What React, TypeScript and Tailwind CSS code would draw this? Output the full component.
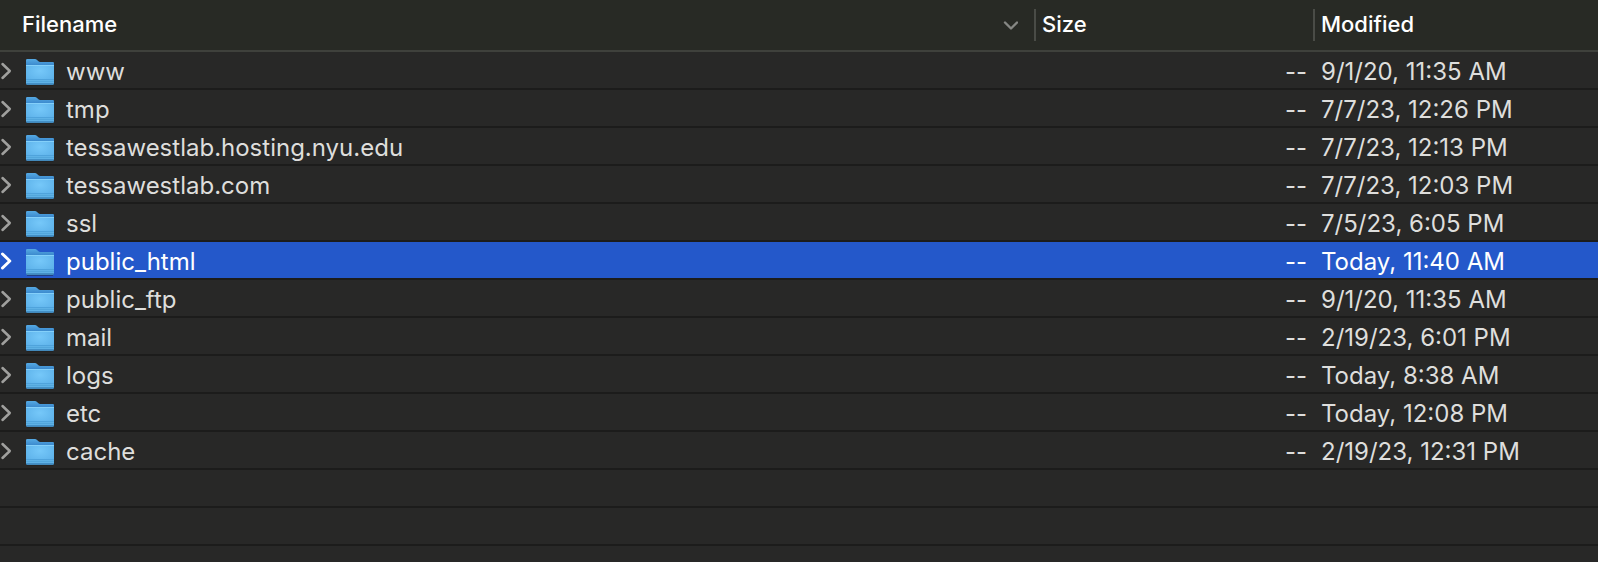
import { useState } from 'react';

const files = [
    { name: 'www', modified: '9/1/20, 11:35 AM' },
    { name: 'tmp', modified: '7/7/23, 12:26 PM' },
    { name: 'tessawestlab.hosting.nyu.edu', modified: '7/7/23, 12:13 PM' },
    { name: 'tessawestlab.com', modified: '7/7/23, 12:03 PM' },
    { name: 'ssl', modified: '7/5/23, 6:05 PM' },
    { name: 'public_html', modified: 'Today, 11:40 AM' },
    { name: 'public_ftp', modified: '9/1/20, 11:35 AM' },
    { name: 'mail', modified: '2/19/23, 6:01 PM' },
    { name: 'logs', modified: 'Today, 8:38 AM' },
    { name: 'etc', modified: 'Today, 12:08 PM' },
    { name: 'cache', modified: '2/19/23, 12:31 PM' },
];

const FolderIcon = () => (
    <svg width="28" height="28" viewBox="0 0 28 28" className="shrink-0" aria-hidden="true">
        <defs>
            <linearGradient id="folder-back" x1="0" y1="0" x2="0" y2="1">
                <stop offset="0" stopColor="#55a9e3" />
                <stop offset="0.25" stopColor="#3a88cc" />
            </linearGradient>
            <radialGradient id="folder-front" cx="0.5" cy="0.3" r="0.7">
                <stop offset="0" stopColor="#76c8f9" />
                <stop offset="1" stopColor="#5aafe8" />
            </radialGradient>
        </defs>
        <path d="M0.500 26h27l-.7 1.500H1.200z" fill="#1b1d1f" fillOpacity="0.8" />
        <path d="M0 2.200Q0 1 1.200 1H9q1 0 1.800.7l1.600 1.500q.8.800 1.800.8H27q1 0 1 1.200V25q0 1.500-1.200 1.500H1.200Q0 26.500 0 25z" fill="url(#folder-back)" />
        <path d="M0 7h28v18q0 1.500-1.200 1.500H1.200Q0 26.500 0 25z" fill="url(#folder-front)" />
        <path d="M0 7h28v1H0z" fill="#84d0fa" />
        <path d="M0 21h28v1H0z" fill="#4fa3dc" />
        <path d="M0 22h28v3H0z" fill="#5fb2e6" />
        <path d="M0 23h28v1H0z" fill="#52a6dc" />
        <path d="M0 25h28q0 1.500-1.200 1.500H1.200Q0 26.500 0 25z" fill="#438fc6" />
    </svg>
);

export default function App() {
    const [selected, setSelected] = useState('public_html');

    return (
        <main className="min-h-screen bg-[#282827] font-['Inter',sans-serif] text-[#dededc]">
            <table className="w-full table-fixed border-separate border-spacing-0 text-left">
                <thead>
                    <tr className="h-[52px] bg-[#282a25] text-[22px] text-white">
                        <th className="border-b-2 border-[#3f413c] p-0 font-medium">
                            <button className="flex h-8 w-full items-center justify-between pr-4 pb-0.5 pl-[22px]">
                                Filename
                                <svg width="16" height="16" viewBox="0 0 16 16" fill="none" stroke="#868784" strokeWidth="2.4" strokeLinecap="round" strokeLinejoin="round" aria-hidden="true">
                                    <path d="M3 6.500l6 6 6-6" />
                                </svg>
                            </button>
                        </th>
                        <th className="w-[279px] border-b-2 border-[#3f413c] p-0 font-medium">
                            <button className="flex h-8 w-full items-center border-l-2 border-[#4a4c47] pb-0.5 pl-[6px]">Size</button>
                        </th>
                        <th className="w-[285px] border-b-2 border-[#3f413c] p-0 font-medium">
                            <button className="flex h-8 w-full items-center border-l-2 border-[#4a4c47] pb-0.5 pl-[6px]">Modified</button>
                        </th>
                    </tr>
                </thead>
                <tbody className="text-2xl leading-8">
                    {files.map(({ name, modified }) => {
                        const active = name === selected;
                        return (
                            <tr key={name} onClick={() => setSelected(name)} className={active ? 'bg-[#2458ca] bg-clip-padding text-white' : ''}>
                                <td className="h-[38px] border-b-2 border-[#1c1c1b] p-0 pt-1">
                                    <div className="flex h-8 items-center">
                                        <button aria-label={`Expand ${name}`} className={active ? 'text-white' : 'text-[#a0a09e]'}>
                                            <svg width="12" height="20" viewBox="0 0 12 20" fill="none" stroke="currentColor" strokeWidth={active ? 3 : 2.5} strokeLinecap="round" strokeLinejoin="round" aria-hidden="true">
                                                <path d="M2.500 2l7.300 7-7.300 7" />
                                            </svg>
                                        </button>
                                        <span className="ml-[14px] flex items-center gap-3">
                                            <FolderIcon />
                                            {name}
                                        </span>
                                    </div>
                                </td>
                                <td className="border-b-2 border-[#1c1c1b] p-0 pt-1 pr-[6px] text-right">--</td>
                                <td className="border-b-2 border-[#1c1c1b] p-0 pt-1 pl-2">{modified}</td>
                            </tr>
                        );
                    })}
                    {/* empty rows below the listing */}
                    {[0, 1].map((i) => (
                        <tr key={i}>
                            <td colSpan={3} className="h-[38px] border-b-2 border-[#1c1c1b] p-0" />
                        </tr>
                    ))}
                </tbody>
            </table>
        </main>
    );
}
